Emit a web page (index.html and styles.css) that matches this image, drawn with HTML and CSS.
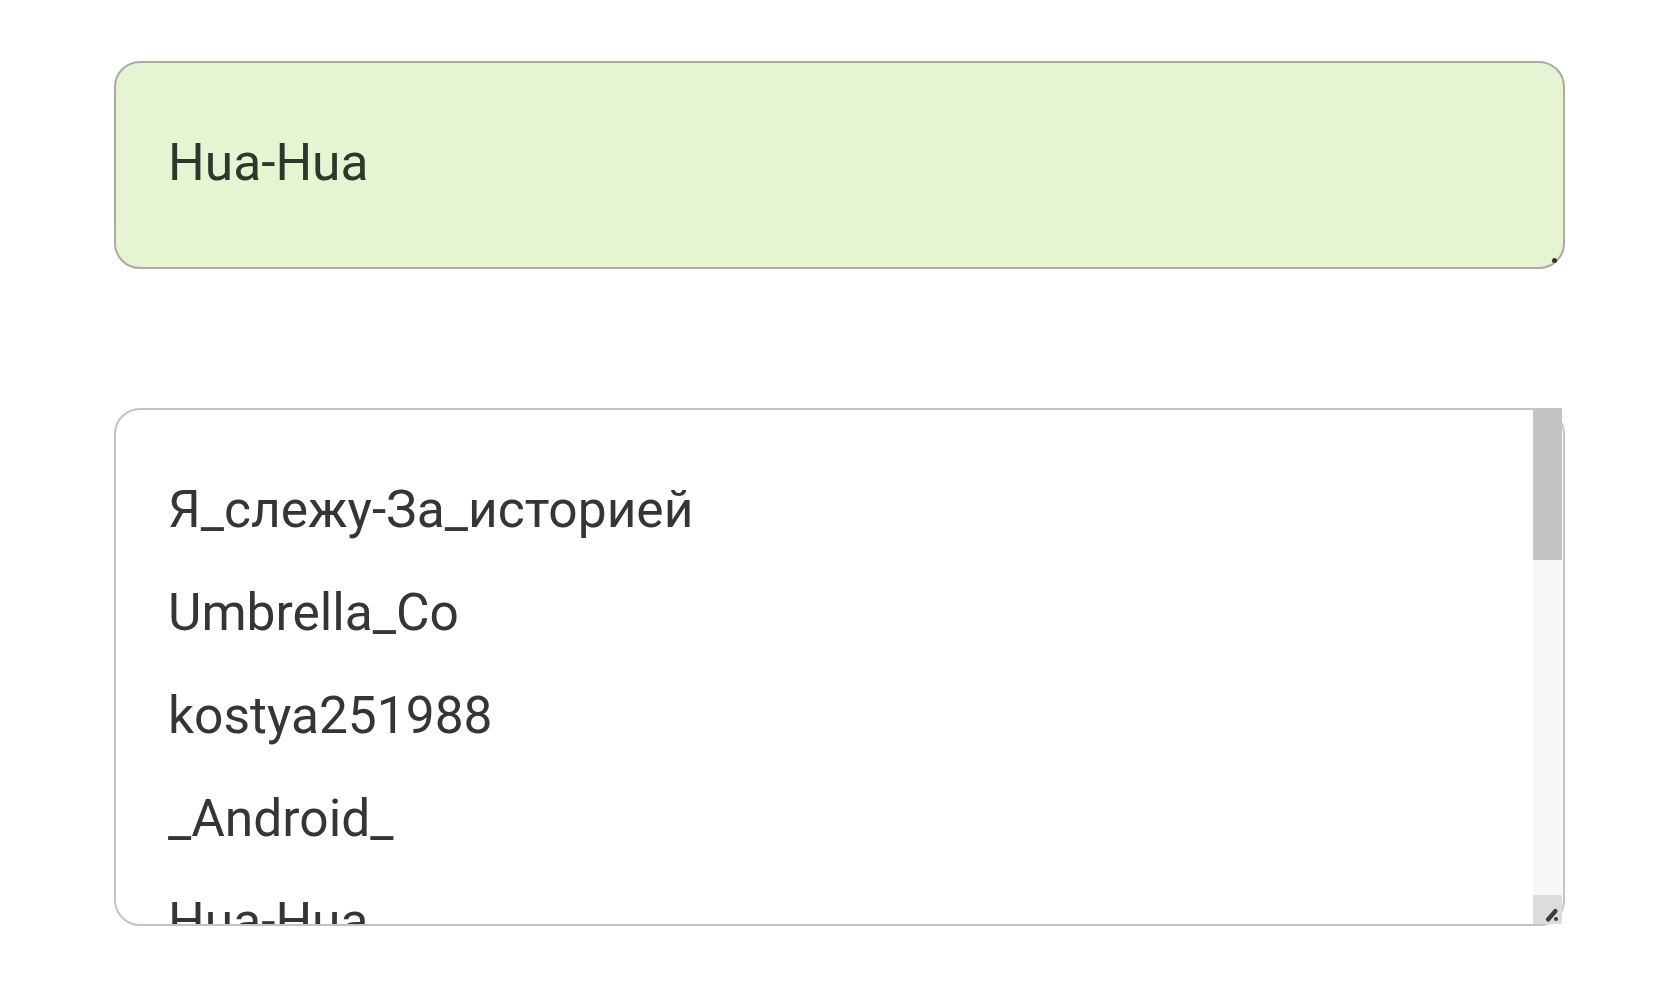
FILE: index.html
```html
<!DOCTYPE html>
<html lang="ru">
  <head>
    <meta charset="utf-8">
    <meta content="width=device-width, initial-scale=1.0" name="viewport">
    <link rel="stylesheet" href="styles.css">
    <title>Hua-Hua</title>
  </head>
  <body>
    <main class="page">
      <div class="field picked">
        <span>Hua-Hua</span>
        <i class="dot"></i>
      </div>

      <div class="field list">
        <ul class="names">
          <li>Я_слежу-За_историей</li>
          <li>Umbrella_Co</li>
          <li>kostya251988</li>
          <li>_Android_</li>
          <li>Hua-Hua</li>
        </ul>
        <div class="scroll">
          <div class="thumb"></div>
          <div class="track"></div>
          <div class="corner">
            <svg width="29" height="29" viewBox="0 0 29 29">
              <path d="M15 24.5 L22.5 16" stroke="#3c3c3c" stroke-width="4.2" stroke-linecap="round" fill="none"/>
              <circle cx="23" cy="24" r="2" fill="#3c3c3c"/>
            </svg>
          </div>
        </div>
      </div>
    </main>
  </body>
</html>
```

FILE: styles.css
```css
* { box-sizing: border-box; }
body {
    margin: 0;
    background: #fff;
    font-family: Roboto, "Noto Sans", sans-serif;
}
.page {
    display: flex;
    flex-direction: column;
    gap: 139px;
    padding: 61px 114px 0;
}
.field {
    border: 2px solid #c3c3c3;
    border-radius: 26px;
    font-size: 51.5px;
}
.picked {
    position: relative;
    display: flex;
    align-items: center;
    height: 208px;
    padding: 0 0 5px 52px;
    background: #e6f5d1;
    border-color: #a8aca3;
    color: #2c382c;
}
.picked .dot {
    position: absolute;
    right: 6px;
    bottom: 4px;
    width: 5px;
    height: 5px;
    border-radius: 50%;
    background: #333;
}
.list {
    display: flex;
    height: 518px;
}
.names {
    flex: 1;
    margin: 0;
    padding: 48px 0 0 52px;
    list-style: none;
    overflow: hidden;
    line-height: 103px;
    color: #353535;
}
.names li {
    white-space: nowrap;
}
.scroll {
    display: flex;
    flex-direction: column;
    width: 29px;
    margin: -2px 1px 0 0;
}
.scroll .thumb {
    height: 152px;
    background: #c3c3c3;
}
.scroll .track {
    flex: 1;
    background: #f7f7f7;
}
.scroll .corner {
    height: 29px;
    background: #dcdcdc;
}
.scroll svg {
    display: block;
}
```
